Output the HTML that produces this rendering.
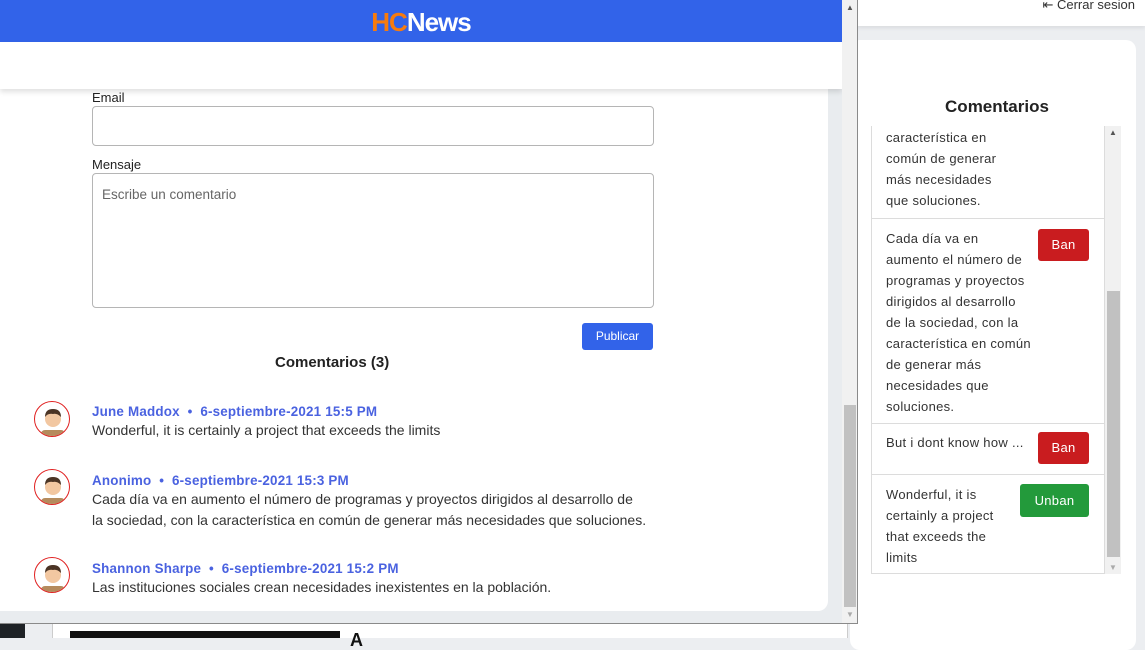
<!DOCTYPE html>
<html><head><meta charset="utf-8"><style>
*{box-sizing:border-box;margin:0;padding:0}
body{width:1145px;height:638px;overflow:hidden;background:#eceef1;font-family:"Liberation Sans",sans-serif;position:relative;color:#212529}
.abs{position:absolute}
.topbar{left:857px;top:0;width:288px;height:26px;background:#fff;box-shadow:0 2px 4px rgba(0,0,0,.08)}
.rcard{left:850px;top:40px;width:286px;height:610px;background:#fff;border-radius:10px}
.list{left:871px;top:126px;width:234px;height:448px;border:1px solid #dcdcdc;border-top:none;overflow:hidden;background:#fff}
.item{position:relative;border-bottom:1px solid #dcdcdc;padding:0 0 0 14px;font-size:13px;line-height:21px;color:#333;letter-spacing:.3px}
.btn{position:absolute;color:#fff;font-size:13px;border-radius:3px;text-align:center;line-height:32px;height:32px}
.ban{background:#c91c1f;width:51px;right:15px}
.unban{background:#239a3b;width:69px;right:15px}
.popup{left:0;top:0;width:858px;height:624px;background:#e9ecef;border-right:1px solid #8a8a8a;border-bottom:1px solid #8a8a8a;overflow:hidden}
.hdr{left:0;top:0;width:842px;height:42px;background:#3263e9;text-align:center;font-weight:bold;font-size:26px;line-height:44px;color:#fff;letter-spacing:-1px}
.nav{left:0;top:42px;width:842px;height:47px;background:#fff;box-shadow:0 3px 5px rgba(0,0,0,.12)}
.card{left:-10px;top:89px;width:838px;height:522px;background:#fff;border-radius:0 0 10px 10px}
.sb{left:842px;top:0;width:16px;height:624px;background:#f1f1f1}
label{position:absolute;font-size:13px;color:#222}
.inp{position:absolute;border:1px solid #b5b5b5;border-radius:4px;background:#fff}
.av{position:absolute;left:34px;width:36px;height:36px;border:1.5px solid #e02020;border-radius:50%;background:#fff;overflow:hidden}
.cm{position:absolute;left:92px;font-size:13.4px}
.cm .n{color:#4a62e0;font-weight:bold;letter-spacing:.2px}
.cm p{color:#333;line-height:21px;margin-top:1px;font-size:14px;white-space:nowrap}
</style></head><body>
<div class="abs topbar"><div class="abs" style="right:10px;top:-3px;font-size:13px;color:#333">⇤ Cerrar sesion</div></div>
<div class="abs rcard"></div>
<div class="abs" style="left:872px;top:97px;width:250px;text-align:center;font-size:17px;font-weight:bold;color:#222">Comentarios</div>
<div class="abs list">
 <div class="item" style="height:93px;padding-top:1px">característica en<br>común de generar<br>más necesidades<br>que soluciones.</div>
 <div class="item" style="height:205px;padding-top:9px"><div style="white-space:nowrap">Cada día va en<br>aumento el número de<br>programas y proyectos<br>dirigidos al desarrollo<br>de la sociedad, con la<br>característica en común<br>de generar más<br>necesidades que<br>soluciones.</div><div class="btn ban" style="top:10px">Ban</div></div>
 <div class="item" style="height:51px;padding-top:8px">But i dont know how ...<div class="btn ban" style="top:8px">Ban</div></div>
 <div class="item" style="height:99px;padding-top:9px;border-bottom:none"><div style="width:130px">Wonderful, it is certainly a project that exceeds the limits</div><div class="btn unban" style="top:9px;height:33px;line-height:33px">Unban</div></div>
</div>
<div class="abs" style="left:1105px;top:126px;width:16px;height:448px;background:#f1f1f1"><div class="abs" style="left:2px;top:165px;width:13px;height:266px;background:#c1c1c1"></div><div class="abs" style="left:4px;top:2px;font-size:8px;color:#555">▲</div><div class="abs" style="left:4px;bottom:2px;font-size:8px;color:#aaa">▼</div></div>
<div class="abs" style="left:0;top:624px;width:25px;height:14px;background:#1e2226"></div>
<div class="abs" style="left:52px;top:624px;width:796px;height:14px;background:#fff;border-left:1px solid #ccc;border-right:1px solid #ccc"></div>
<div class="abs" style="left:70px;top:631px;width:270px;height:7px;background:#111"></div>
<div class="abs" style="left:350px;top:630px;font-size:18px;font-weight:bold;color:#111;line-height:20px">A</div>
<div class="abs popup">
 <div class="abs card"></div>
 <div class="abs hdr"><span style="color:#f77b0e">HC</span>News</div>
 <div class="abs nav"></div>
 <label style="left:92px;top:90px">Email</label>
 <div class="inp" style="left:92px;top:106px;width:562px;height:40px"></div>
 <label style="left:92px;top:157px">Mensaje</label>
 <div class="inp" style="left:92px;top:173px;width:562px;height:135px"><span style="position:absolute;left:9px;top:13px;font-size:13.5px;color:#666">Escribe un comentario</span></div>
 <div class="abs" style="left:582px;top:323px;width:71px;height:27px;background:#3263e9;border-radius:3px;color:#fff;font-size:12px;text-align:center;line-height:27px">Publicar</div>
 <div class="abs" style="left:275px;top:354px;font-size:15px;font-weight:bold;color:#222">Comentarios (3)</div>
 <div class="av" style="top:401px"><svg width="36" height="36" viewBox="0 0 36 36"><rect x="6" y="28" width="24" height="10" rx="4" fill="#b58b5d"/><circle cx="18" cy="17" r="8" fill="#f2c7a1"/><path d="M10 15 Q10 7 18 7 Q26 7 26 15 Q22 11 18 12 Q13 11 10 15Z" fill="#4b3425"/></svg></div>
 <div class="cm" style="top:404px"><span class="n">June Maddox &nbsp;•&nbsp; 6-septiembre-2021 15:5 PM</span><p>Wonderful, it is certainly a project that exceeds the limits</p></div>
 <div class="av" style="top:469px"><svg width="36" height="36" viewBox="0 0 36 36"><rect x="6" y="28" width="24" height="10" rx="4" fill="#b58b5d"/><circle cx="18" cy="17" r="8" fill="#f2c7a1"/><path d="M10 15 Q10 7 18 7 Q26 7 26 15 Q22 11 18 12 Q13 11 10 15Z" fill="#4b3425"/></svg></div>
 <div class="cm" style="top:473px"><span class="n">Anonimo &nbsp;•&nbsp; 6-septiembre-2021 15:3 PM</span><p>Cada día va en aumento el número de programas y proyectos dirigidos al desarrollo de<br>la sociedad, con la característica en común de generar más necesidades que soluciones.</p></div>
 <div class="av" style="top:557px"><svg width="36" height="36" viewBox="0 0 36 36"><rect x="6" y="28" width="24" height="10" rx="4" fill="#b58b5d"/><circle cx="18" cy="17" r="8" fill="#f2c7a1"/><path d="M10 15 Q10 7 18 7 Q26 7 26 15 Q22 11 18 12 Q13 11 10 15Z" fill="#4b3425"/></svg></div>
 <div class="cm" style="top:561px"><span class="n">Shannon Sharpe &nbsp;•&nbsp; 6-septiembre-2021 15:2 PM</span><p>Las instituciones sociales crean necesidades inexistentes en la población.</p></div>
 <div class="abs sb"><div class="abs" style="left:4px;top:3px;font-size:8px;color:#555">▲</div><div class="abs" style="left:2px;top:405px;width:12px;height:202px;background:#c1c1c1"></div><div class="abs" style="left:4px;top:610px;font-size:8px;color:#aaa">▼</div></div>
</div>
</body></html>
